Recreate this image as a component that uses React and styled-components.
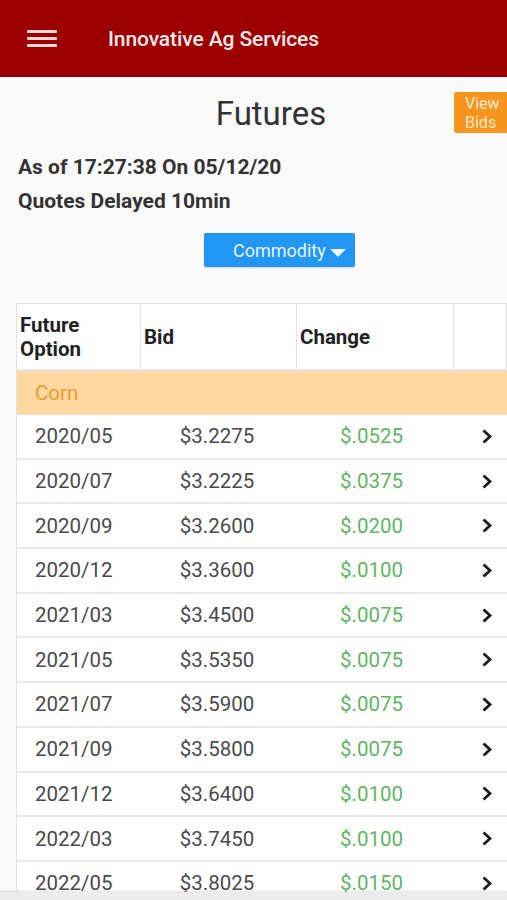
import React from "react";
import styled, { createGlobalStyle } from "styled-components";

const Global = createGlobalStyle`
  html, body { margin: 0; padding: 0; background: #fafafa; overflow: hidden; }
  body { font-family: Roboto, "Liberation Sans", Arial, sans-serif; }
`;

const Page = styled.div`
  width: 507px;
  min-height: 900px;
  background: #fafafa;
  overflow: hidden;
`;

const AppBar = styled.header`
  height: 77px;
  background: #9c0000;
  display: flex;
  align-items: center;
  box-sizing: border-box;
  padding-left: 27px;
`;

const Burger = styled.div`
  width: 30px;
  display: flex;
  flex-direction: column;
  gap: 4px;
  margin-right: 51px;
  & > span {
    display: block;
    height: 3px;
    background: #f6dada;
    border-radius: 1px;
  }
`;

const AppTitle = styled.h1`
  margin: 0;
  font-size: 21px;
  font-weight: 500;
  color: #fbeaea;
  letter-spacing: -0.1px;
`;

const TitleRow = styled.div`
  display: grid;
  grid-template-columns: 1fr auto 1fr;
  align-items: start;
  padding: 15px 0 0 35px;
`;

const PageTitle = styled.h2`
  grid-column: 2;
  margin: 0;
  font-size: 33px;
  font-weight: 400;
  color: #333;
  line-height: 44px;
`;

const ViewBids = styled.button`
  grid-column: 3;
  justify-self: end;
  width: 53px;
  height: 41px;
  border: none;
  border-radius: 2px 0 0 2px;
  background: #f7941d;
  color: #fde9cf;
  font-family: inherit;
  font-size: 16px;
  line-height: 19px;
  text-align: left;
  padding: 1px 0 0 11px;
  white-space: nowrap;
  overflow: hidden;
`;

const Info = styled.div`
  padding: 20px 0 0 18px;
  display: flex;
  flex-direction: column;
  gap: 11px;
`;

const InfoLine = styled.div`
  font-size: 21px;
  font-weight: 700;
  color: #333;
  line-height: 23px;
`;

const ButtonRow = styled.div`
  padding: 20px 0 0 204px;
`;

const DropButton = styled.button`
  width: 151px;
  height: 34px;
  border: none;
  border-radius: 2px;
  background: #2196f3;
  color: #e8f3fe;
  font-family: inherit;
  font-size: 18px;
  display: flex;
  align-items: center;
  padding: 0 0 0 29px;
  gap: 4px;
  box-shadow: 0 1px 2px rgba(0, 0, 0, 0.15);
`;

const Caret = styled.span`
  width: 0;
  height: 0;
  border-left: 8px solid transparent;
  border-right: 8px solid transparent;
  border-top: 8px solid #eef6ff;
  margin-top: 6px;
`;

const Table = styled.div`
  margin: 36px 0 0 16px;
  border-top: 1px solid #e2e2e2;
  border-left: 1px solid #e2e2e2;
  background: #fff;
`;

const cols = "124px 156px 157px 1fr";

const HeadRow = styled.div`
  display: grid;
  grid-template-columns: ${cols};
  height: 67px;
  border-bottom: 2px solid #e4e4e4;
  box-sizing: border-box;
`;

const HeadCell = styled.div`
  border-right: 1px solid #e4e4e4;
  display: flex;
  align-items: center;
  padding-left: 3px;
  font-size: 20.5px;
  font-weight: 700;
  color: #222;
  line-height: 24px;
`;

const GroupRow = styled.div`
  height: 44px;
  background: #fdd9a1;
  display: flex;
  align-items: center;
  padding-left: 18px;
  font-size: 20.5px;
  color: #eb9b2c;
  border-bottom: 1px solid #ede3d3;
  box-sizing: border-box;
`;

const Row = styled.div`
  display: grid;
  grid-template-columns: ${cols};
  height: 44.7px;
  box-sizing: border-box;
  border-bottom: 2px solid #e9e9e9;
  align-items: center;
  font-size: 20.5px;
`;

const Cell = styled.div`
  text-align: ${(p) => p.$align || "center"};
  padding-left: ${(p) => p.$pl || 0}px;
  padding-right: ${(p) => p.$pr || 0}px;
  color: ${(p) => p.$color || "#4a4a4a"};
`;

const Chevron = styled.svg`
  display: block;
  margin-left: 27px;
`;

const BottomBar = styled.div`
  position: fixed;
  left: 0;
  right: 0;
  bottom: 0;
  height: 8px;
  background: #ececec;
  box-shadow: 0 -1px 2px rgba(0, 0, 0, 0.12);
`;

const rows = [
  ["2020/05", "$3.2275", "$.0525"],
  ["2020/07", "$3.2225", "$.0375"],
  ["2020/09", "$3.2600", "$.0200"],
  ["2020/12", "$3.3600", "$.0100"],
  ["2021/03", "$3.4500", "$.0075"],
  ["2021/05", "$3.5350", "$.0075"],
  ["2021/07", "$3.5900", "$.0075"],
  ["2021/09", "$3.5800", "$.0075"],
  ["2021/12", "$3.6400", "$.0100"],
  ["2022/03", "$3.7450", "$.0100"],
  ["2022/05", "$3.8025", "$.0150"],
];

export default function App() {
  return (
    <Page>
      <Global />
      <AppBar>
        <Burger>
          <span />
          <span />
          <span />
        </Burger>
        <AppTitle>Innovative Ag Services</AppTitle>
      </AppBar>
      <TitleRow>
        <PageTitle>Futures</PageTitle>
        <ViewBids>
          View
          <br />
          Bids
        </ViewBids>
      </TitleRow>
      <Info>
        <InfoLine>As of 17:27:38 On 05/12/20</InfoLine>
        <InfoLine>Quotes Delayed 10min</InfoLine>
      </Info>
      <ButtonRow>
        <DropButton>
          Commodity <Caret />
        </DropButton>
      </ButtonRow>
      <Table>
        <HeadRow>
          <HeadCell>
            Future
            <br />
            Option
          </HeadCell>
          <HeadCell>Bid</HeadCell>
          <HeadCell>Change</HeadCell>
          <HeadCell />
        </HeadRow>
        <GroupRow>Corn</GroupRow>
        {rows.map(([d, b, c]) => (
          <Row key={d}>
            <Cell $align="left" $pl={18}>{d}</Cell>
            <Cell $pr={4}>{b}</Cell>
            <Cell $color="#5cb860" $pr={8}>{c}</Cell>
            <Chevron width="12" height="15" viewBox="0 0 12 15">
              <polyline
                points="2.5,1.5 9,7.5 2.5,13.5"
                fill="none"
                stroke="#1a1a1a"
                strokeWidth="2.8"
              />
            </Chevron>
          </Row>
        ))}
      </Table>
      <BottomBar />
    </Page>
  );
}
